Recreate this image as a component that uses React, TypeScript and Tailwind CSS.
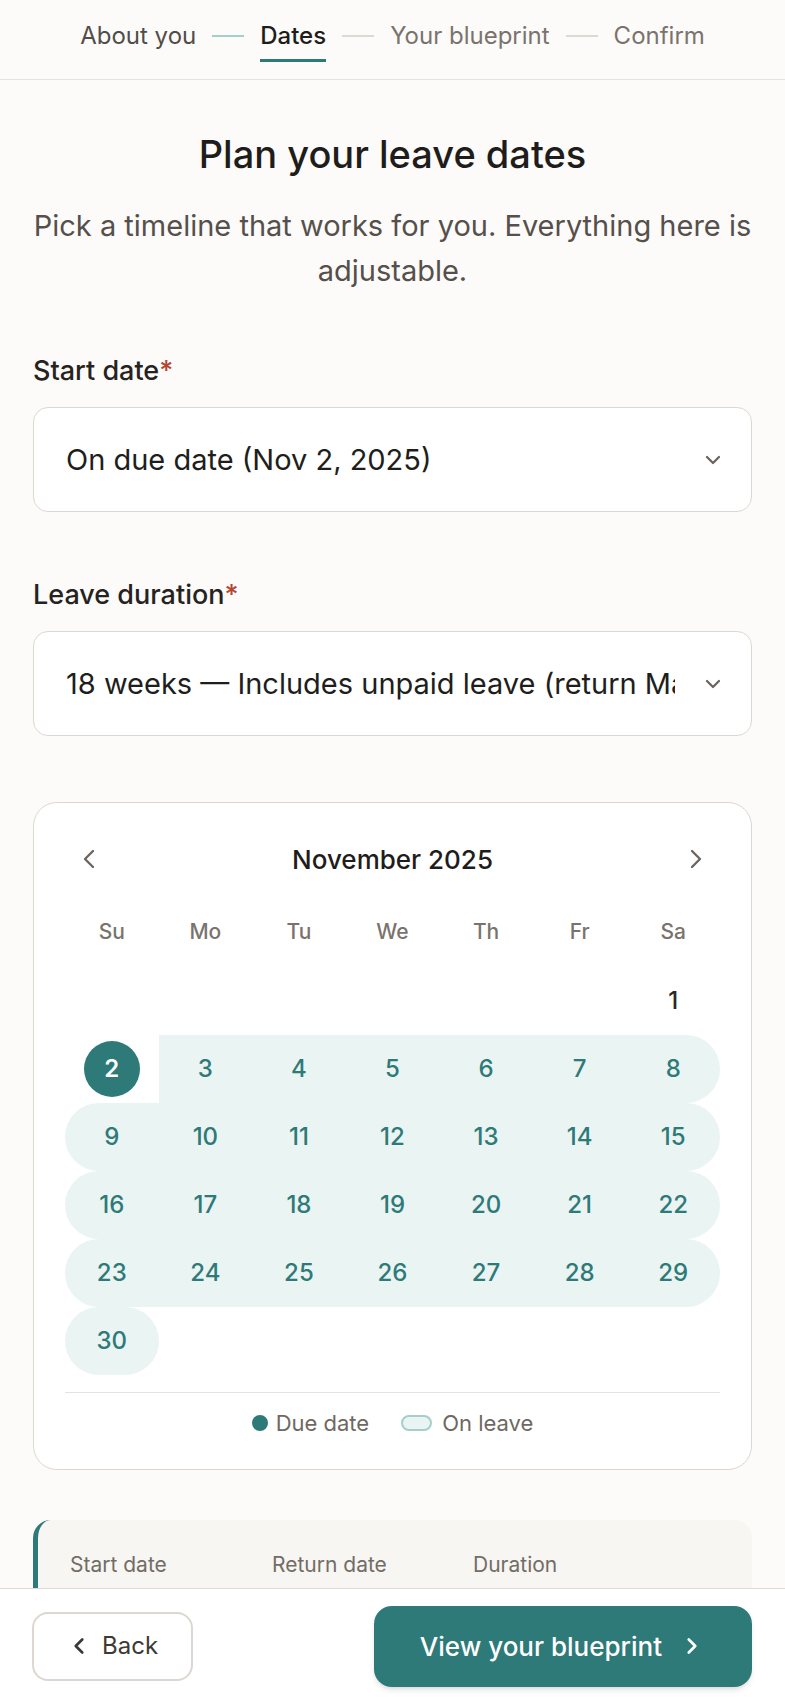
import { ChevronDown, ChevronLeft, ChevronRight } from "lucide-react";

const weeks: (number | null)[][] = [
  [null, null, null, null, null, null, 1],
  [2, 3, 4, 5, 6, 7, 8],
  [9, 10, 11, 12, 13, 14, 15],
  [16, 17, 18, 19, 20, 21, 22],
  [23, 24, 25, 26, 27, 28, 29],
  [30, null, null, null, null, null, null],
];

const weekdays = ["Su", "Mo", "Tu", "We", "Th", "Fr", "Sa"];

function Steps() {
  return (
    <header className="flex h-[80px] items-center justify-center gap-4 border-b border-[#e6e3de] pb-[8px]">
      <span className="border-y-[3px] border-transparent py-[9px] text-[24px] leading-[28px] text-[#524d48]">
        About you
      </span>
      <span className="h-[2px] w-8 bg-[#a3cfcd]" />
      <span className="border-y-[3px] border-transparent border-b-[#2e7a78] py-[9px] text-[24px] font-medium leading-[28px] text-[#1f1d1b]">
        Dates
      </span>
      <span className="h-[2px] w-8 bg-[#dcd9d3]" />
      <span className="border-y-[3px] border-transparent py-[9px] text-[24px] leading-[28px] text-[#7a736d]">
        Your blueprint
      </span>
      <span className="h-[2px] w-8 bg-[#dcd9d3]" />
      <span className="border-y-[3px] border-transparent py-[9px] text-[24px] leading-[28px] text-[#7a736d]">
        Confirm
      </span>
    </header>
  );
}

function Field({ label, value }: { label: string; value: string }) {
  return (
    <div>
      <div className="text-[27px] font-medium leading-[36px] text-[#26231f]">
        {label}
        <span className="text-[#b4452f]">*</span>
      </div>
      <div className="mt-[18px] flex h-[105px] items-center rounded-[15px] border border-[#dcd8d1] bg-white pl-[32px] pr-[26px]">
        <div className="min-w-0 flex-1 overflow-hidden whitespace-nowrap text-[29px] text-[#201e1c]">
          {value}
        </div>
        <ChevronDown className="ml-[26px] shrink-0 text-[#6b645e]" size={24} strokeWidth={2.25} />
      </div>
    </div>
  );
}

function DayCell({ day, col }: { day: number | null; col: number }) {
  if (day === null) return <div className="h-[68px]" />;
  if (day === 2) {
    return (
      <div className="flex h-[68px] items-center justify-center">
        <span className="flex h-14 w-14 items-center justify-center rounded-full bg-[#2e7a78] text-[24px] font-semibold text-white">
          2
        </span>
      </div>
    );
  }
  if (day < 2) {
    return (
      <div className="flex h-[68px] items-center justify-center text-[24px] font-medium text-[#2a2724]">
        {day}
      </div>
    );
  }
  const roundLeft = col === 0;
  const roundRight = col === 6 || day === 30;
  return (
    <div
      className={[
        "flex h-[68px] items-center justify-center bg-[#eaf4f3] text-[24px] font-medium text-[#2e7a78]",
        roundLeft ? "rounded-l-full" : "",
        roundRight ? "rounded-r-full" : "",
      ].join(" ")}
    >
      {day}
    </div>
  );
}

function Calendar() {
  return (
    <div className="mt-[66px] rounded-[24px] border border-[#dcd8d1] bg-white px-[31px] pt-[36px] pb-[31px]">
      <div className="flex h-10 items-center justify-between px-2">
        <ChevronLeft className="text-[#6b645e]" size={32} strokeWidth={1.75} />
        <span className="text-[26px] font-medium text-[#1f1d1b]">November 2025</span>
        <ChevronRight className="text-[#6b645e]" size={32} strokeWidth={1.75} />
      </div>
      <div className="mt-[29px] grid h-[48px] grid-cols-7 items-center">
        {weekdays.map((d) => (
          <span key={d} className="text-center text-[21px] font-medium text-[#7a736d]">
            {d}
          </span>
        ))}
      </div>
      <div className="mt-[11px]">
        {weeks.map((w, i) => (
          <div key={i} className="grid grid-cols-7">
            {w.map((d, c) => (
              <DayCell key={c} day={d} col={c} />
            ))}
          </div>
        ))}
      </div>
      <div className="mt-[17px] border-t border-[#e6e3de]" />
      <div className="mt-[15px] flex h-[30px] items-center justify-center text-[22px] text-[#6e6862]">
        <span className="h-4 w-4 rounded-full bg-[#2e7a78]" />
        <span className="ml-2">Due date</span>
        <span className="ml-8 h-4 w-[31px] rounded-full border-2 border-[#a3cfcd] bg-[#eaf4f3]" />
        <span className="ml-[10px]">On leave</span>
      </div>
    </div>
  );
}

function Summary() {
  return (
    <div className="mt-[50px] rounded-[18px] border-l-[5px] border-[#2e7a78] bg-[#f7f6f2] pt-[31px] pb-[32px] pl-[32px] pr-[32px]">
      <div className="grid grid-cols-[202px_201px_1fr] text-[21px] leading-[28px] text-[#736c66]">
        <span>Start date</span>
        <span>Return date</span>
        <span>Duration</span>
      </div>
      <div className="mt-2 grid grid-cols-[202px_201px_1fr] text-[24px] font-medium text-[#1f1d1b]">
        <span>Nov 2, 2025</span>
        <span>Mar 9, 2026</span>
        <span>18 weeks</span>
      </div>
    </div>
  );
}

export default function App() {
  return (
    <div className="min-h-screen bg-[#fcfbf9] font-['Inter',sans-serif]">
      <Steps />
      <main className="px-[33px] pb-[160px]">
        <h1 className="mt-[51px] text-center text-[38px] font-medium leading-[46px] text-[#1f1d1b]">
          Plan your leave dates
        </h1>
        <p className="mt-[26px] text-center text-[29px] leading-[45px] text-[#55504b]">
          Pick a timeline that works for you. Everything here is adjustable.
        </p>
        <div className="mt-[60px]">
          <Field label="Start date" value="On due date (Nov 2, 2025)" />
        </div>
        <div className="mt-[65px]">
          <Field label="Leave duration" value="18 weeks — Includes unpaid leave (return Mar 9, 2026)" />
        </div>
        <Calendar />
        <Summary />
      </main>
      <footer className="fixed inset-x-0 bottom-0 flex h-[115px] items-center justify-between border-t border-[#dedad3] bg-white pl-[32px] pr-[33px]">
        <button className="flex h-[69px] items-center rounded-[16px] border-2 border-[#dcd8d1] bg-white pl-[32px] pr-[33px] text-[24px] text-[#3d3935]">
          <ChevronLeft size={26} strokeWidth={2.5} />
          <span className="ml-[10px]">Back</span>
        </button>
        <button className="flex h-[81px] items-center rounded-[18px] bg-[#2e7a78] pl-[46px] pr-[47px] text-[26px] font-medium text-white shadow-md">
          <span>View your blueprint</span>
          <ChevronRight className="ml-[17px]" size={26} strokeWidth={2.5} />
        </button>
      </footer>
    </div>
  );
}
